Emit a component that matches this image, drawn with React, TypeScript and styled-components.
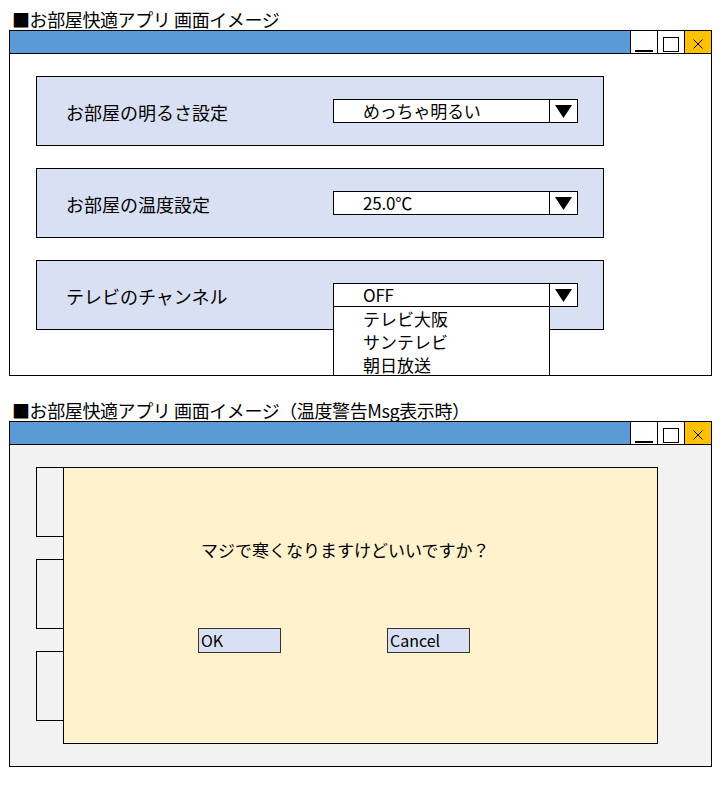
import styled, { createGlobalStyle } from 'styled-components';

const GlobalStyle = createGlobalStyle`
  html, body {
    margin: 0;
    padding: 0;
    background: #ffffff;
  }
  body {
    font-family: "Noto Sans CJK JP", "Noto Sans", sans-serif;
    color: #000;
  }
`;

const Page = styled.div`
  width: 703px;
  padding: 8px 0 0 9px;
`;

const Heading = styled.div<{ $spaced?: boolean }>`
  height: 22px;
  line-height: 22px;
  font-size: 18px;
  padding-left: 3px;
  margin-top: ${(p) => (p.$spaced ? '23px' : '0')};
  white-space: nowrap;
  letter-spacing: -0.4px;
`;

const Window = styled.div`
  width: 703px;
  box-sizing: border-box;
  border: 1px solid #000;
  display: flex;
  flex-direction: column;
`;

const TitleBar = styled.div`
  height: 22px;
  background: #5b9bd5;
  border-bottom: 1px solid #000;
  display: flex;
  justify-content: flex-end;
`;

const CtrlButton = styled.div<{ $kind: 'min' | 'max' | 'close' }>`
  width: 27px;
  height: 22px;
  box-sizing: border-box;
  border-left: 1px solid #000;
  background: ${(p) => (p.$kind === 'close' ? '#ffc000' : '#ffffff')};
  display: flex;
  justify-content: center;
  align-items: ${(p) => (p.$kind === 'min' ? 'flex-end' : 'center')};
`;

const MinBar = styled.span`
  width: 18px;
  height: 2px;
  background: #000;
  margin-bottom: 1px;
`;

const MaxBox = styled.span`
  width: 16px;
  height: 15px;
  box-sizing: border-box;
  border: 1px solid #000;
  margin-top: 4px;
`;

const WindowBody = styled.div<{ $tone?: 'white' | 'gray' }>`
  position: relative;
  height: 321px;
  overflow: hidden;
  background: ${(p) => (p.$tone === 'gray' ? '#f2f2f2' : '#ffffff')};
  box-sizing: border-box;
  padding: 22px 0 0 26px;
  display: flex;
  flex-direction: column;
  gap: 22px;
`;

const Panel = styled.div<{ $empty?: boolean }>`
  width: 568px;
  height: 70px;
  box-sizing: border-box;
  border: 1px solid #000;
  background: ${(p) => (p.$empty ? 'transparent' : '#dae0f3')};
  display: flex;
  align-items: center;
  padding-left: 29px;
  flex-shrink: 0;
`;

const Label = styled.div`
  width: 267px;
  font-size: 18px;
  line-height: 22px;
  padding-top: 2px;
`;

const Select = styled.div`
  position: relative;
  width: 245px;
  height: 24px;
  box-sizing: border-box;
  border: 1px solid #000;
  background: #fff;
  display: flex;
`;

const SelectValue = styled.div`
  flex: 1;
  padding-left: 29px;
  font-size: 17px;
  line-height: 22px;
  white-space: nowrap;
  letter-spacing: -0.2px;
`;

const ArrowCell = styled.div`
  width: 27px;
  border-left: 1px solid #000;
  display: flex;
  align-items: center;
  justify-content: center;
`;

const OptionList = styled.div`
  position: absolute;
  top: calc(100% + 1px);
  left: -1px;
  width: 217px;
  box-sizing: border-box;
  border: 1px solid #000;
  border-top: none;
  background: #fff;
  display: flex;
  flex-direction: column;
`;

const OptionItem = styled.div`
  height: 23px;
  line-height: 23px;
  padding-left: 29px;
  font-size: 17px;
`;

const Dialog = styled.div`
  position: absolute;
  left: 53px;
  top: 22px;
  width: 595px;
  height: 277px;
  box-sizing: border-box;
  border: 1px solid #000;
  background: #fff2cc;
  padding: 71px 0 0 134px;
  display: flex;
  flex-direction: column;
`;

const Message = styled.div`
  padding-left: 3px;
  font-size: 17px;
  line-height: 22px;
  white-space: nowrap;
`;

const ButtonRow = styled.div`
  margin-top: 67px;
  display: flex;
  gap: 106px;
`;

const DialogButton = styled.div`
  width: 83px;
  height: 25px;
  box-sizing: border-box;
  border: 1px solid #333;
  background: #dae0f3;
  padding-left: 2px;
  font-size: 16px;
  line-height: 23px;
`;

function DownTriangle() {
  return (
    <svg width="17" height="13" viewBox="0 0 17 13">
      <polygon points="0,0 17,0 8.5,13" fill="#000" />
    </svg>
  );
}

function CloseGlyph() {
  return (
    <svg width="10" height="10" viewBox="0 0 10 10" style={{ marginTop: 4 }}>
      <line x1="0.5" y1="0.5" x2="9.5" y2="9.5" stroke="#000" strokeWidth="1" />
      <line x1="9.5" y1="0.5" x2="0.5" y2="9.5" stroke="#000" strokeWidth="1" />
    </svg>
  );
}

function WindowTitle() {
  return (
    <TitleBar>
      <CtrlButton $kind="min">
        <MinBar />
      </CtrlButton>
      <CtrlButton $kind="max">
        <MaxBox />
      </CtrlButton>
      <CtrlButton $kind="close">
        <CloseGlyph />
      </CtrlButton>
    </TitleBar>
  );
}

type Setting = { label: string; value: string; options?: string[] };

const settings: Setting[] = [
  { label: 'お部屋の明るさ設定', value: 'めっちゃ明るい' },
  { label: 'お部屋の温度設定', value: '25.0℃' },
  { label: 'テレビのチャンネル', value: 'OFF', options: ['テレビ大阪', 'サンテレビ', '朝日放送'] },
];

export default function App() {
  return (
    <>
      <GlobalStyle />
      <Page>
        <Heading>■お部屋快適アプリ 画面イメージ</Heading>
        <Window>
          <WindowTitle />
          <WindowBody>
            {settings.map((s) => (
              <Panel key={s.label}>
                <Label>{s.label}</Label>
                <Select>
                  <SelectValue>{s.value}</SelectValue>
                  <ArrowCell>
                    <DownTriangle />
                  </ArrowCell>
                  {s.options && (
                    <OptionList>
                      {s.options.map((o) => (
                        <OptionItem key={o}>{o}</OptionItem>
                      ))}
                    </OptionList>
                  )}
                </Select>
              </Panel>
            ))}
          </WindowBody>
        </Window>

        <Heading $spaced>■お部屋快適アプリ 画面イメージ（温度警告Msg表示時）</Heading>
        <Window>
          <WindowTitle />
          <WindowBody $tone="gray">
            <Panel $empty />
            <Panel $empty />
            <Panel $empty />
            <Dialog>
              <Message>マジで寒くなりますけどいいですか？</Message>
              <ButtonRow>
                <DialogButton>OK</DialogButton>
                <DialogButton>Cancel</DialogButton>
              </ButtonRow>
            </Dialog>
          </WindowBody>
        </Window>
      </Page>
    </>
  );
}
